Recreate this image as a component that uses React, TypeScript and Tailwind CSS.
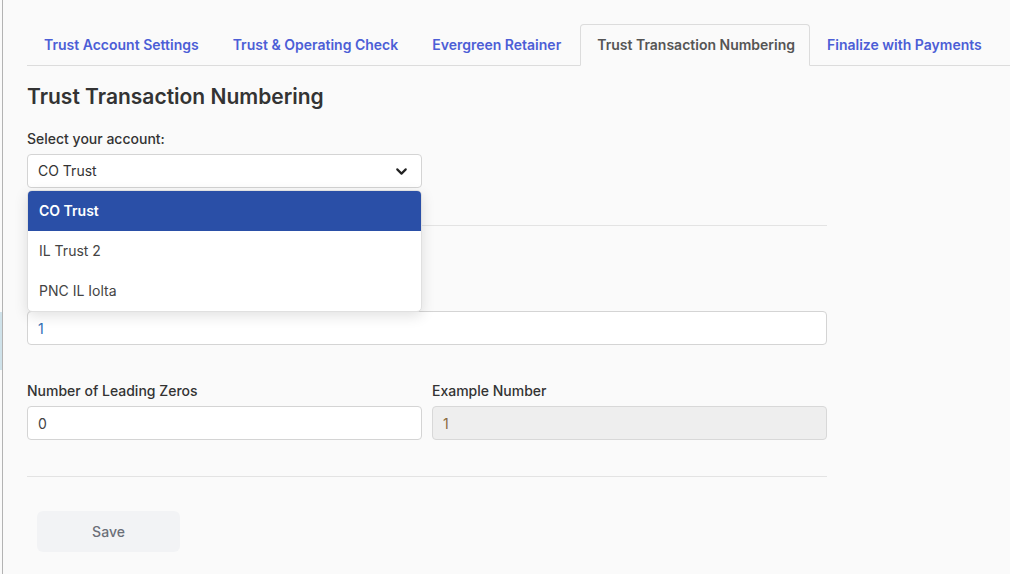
import { ChevronDown } from "lucide-react";

const tabs = [
  "Trust Account Settings",
  "Trust & Operating Check",
  "Evergreen Retainer",
  "Trust Transaction Numbering",
  "Finalize with Payments",
];

const accounts = ["CO Trust", "IL Trust 2", "PNC IL Iolta"];

export default function App() {
  const active = "Trust Transaction Numbering";
  const selected = "CO Trust";

  return (
    <div className="flex min-h-[574px] bg-[#fafafa] font-['Inter',sans-serif] text-[#333]">
      {/* collapsed side panel */}
      <div className="w-[3px] shrink-0 border-r border-[#b3b3b3]">
        <div className="mt-[312px] h-[58px] w-[2px] bg-[#cfe2ea]" />
      </div>

      <div className="flex-1 pl-6 pt-6">
        <ul className="flex border-b border-[#dcdcdc]">
          {tabs.map((t) => (
            <li
              key={t}
              className={
                t === active
                  ? "-mb-px ml-[2px] rounded-t-[4px] border border-[#dcdcdc] border-b-transparent bg-[#fafafa] pl-4 pr-[14px] py-[10px] text-sm font-semibold leading-5 text-[#555]"
                  : "-mb-px border border-transparent px-4 py-[10px] text-sm font-semibold leading-5 text-[#4c5ed6]"
              }
            >
              {t}
            </li>
          ))}
        </ul>

        <div className="w-[800px]">
          <h2 className="mt-[17px] text-[21px] font-semibold leading-[28px] text-[#333]">
            Trust Transaction Numbering
          </h2>

          <label className="mt-[18px] block text-sm font-medium leading-5">Select your account:</label>
          <div className="relative mt-[5px] w-[395px]">
            <div className="flex h-[34px] items-center justify-between rounded-[4px] border border-[#d4d4d4] bg-white px-[10px] text-sm text-[#333]">
              <span>{selected}</span>
              <ChevronDown size={17} strokeWidth={3} className="mr-[1px] text-[#222]" />
            </div>
            <ul className="absolute left-0 right-0 top-[calc(100%+2px)] z-10 overflow-hidden rounded-[5px] border border-[#e0e0e0] bg-white shadow-[0_4px_14px_rgba(0,0,0,0.12)]">
              {accounts.map((a) => (
                <li
                  key={a}
                  className={
                    a === selected
                      ? "flex h-10 items-center bg-[#2a4fa7] px-[11px] text-sm font-semibold text-white"
                      : "flex h-10 items-center px-[11px] text-sm text-[#444]"
                  }
                >
                  {a}
                </li>
              ))}
            </ul>
          </div>

          <hr className="mt-[37px] border-[#e3e3e3]" />

          {/* field label sits under the open list */}
          <div className="h-[85px]" />
          <input
            readOnly
            value="1"
            className="block h-[34px] w-full rounded-[4px] border border-[#d4d4d4] bg-white px-[10px] text-sm text-[#2f6fb6] outline-none"
          />

          <div className="mt-[36px] grid grid-cols-2 gap-[10px]">
            <div>
              <label className="block text-sm font-medium leading-5">Number of Leading Zeros</label>
              <input
                readOnly
                value="0"
                className="mt-[5px] block h-[34px] w-full rounded-[4px] border border-[#d4d4d4] bg-white px-[10px] text-sm text-[#444] outline-none"
              />
            </div>
            <div>
              <label className="block text-sm font-medium leading-5">Example Number</label>
              <input
                readOnly
                value="1"
                className="mt-[5px] block h-[34px] w-full rounded-[4px] border border-[#d8d8d8] bg-[#eeeeee] px-[10px] text-sm text-[#8a6b40] outline-none"
              />
            </div>
          </div>

          <hr className="mt-[36px] border-[#e3e3e3]" />

          <button className="ml-[10px] mt-[34px] h-[41px] w-[143px] rounded-md bg-[#f2f3f5] text-sm font-medium text-[#6b6f78]">
            Save
          </button>
        </div>
      </div>
    </div>
  );
}
